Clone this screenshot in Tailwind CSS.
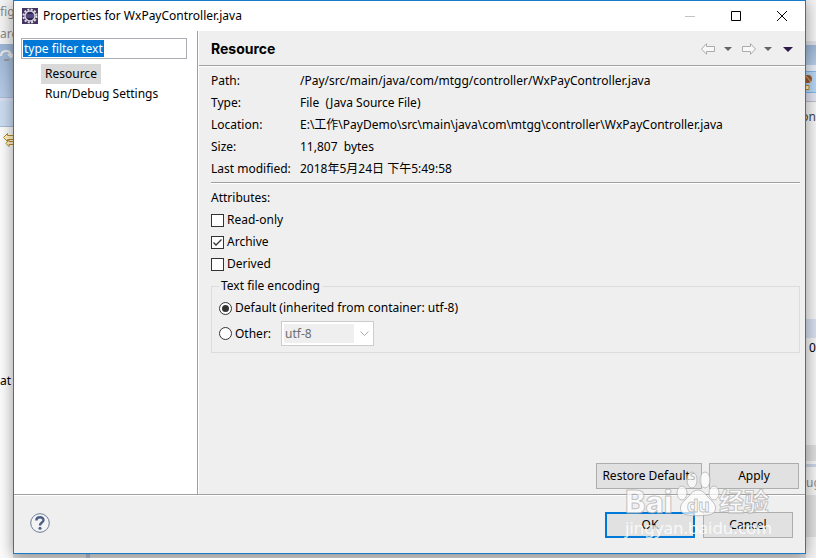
<!DOCTYPE html>
<html lang="en">
<head>
    <meta charset="UTF-8">
    <meta name="viewport" content="width=device-width, initial-scale=1.0">
    <title>Properties for WxPayController.java</title>
    <script src="https://cdn.jsdelivr.net/npm/@tailwindcss/browser@4"></script>
</head>
<body class="min-h-screen bg-[#f3f3f3] font-['Noto_Sans','Noto_Sans_CJK_SC',sans-serif] text-xs leading-[22px] text-black">

<div class="min-h-screen flex overflow-hidden">

    <!-- Workbench, left of the dialog -->
    <div class="w-[13px] shrink-0 flex flex-col overflow-hidden whitespace-nowrap bg-[#fbfbfb]">
        <div class="h-11 pt-px bg-[#f3f3f3] text-[#888]">
            <div>fig</div>
            <div>are</div>
        </div>
        <div class="h-[54px] pt-1 border-b border-[#a9bbd3] bg-linear-to-b from-[#9cb5d5] to-[#b5cbe6]">
            <svg class="w-[13px] h-4" viewBox="0 0 13 16" fill="none" stroke="#e8e8e8" stroke-width="2">
                <path d="M1 8C1 2 10 1 11 7M8 6l3 3 3-3"/>
                <path d="M4 12h5" stroke="#999"/>
            </svg>
        </div>
        <div class="h-[29px] mb-1 border-t-3 border-b border-t-[#d9def0] border-b-[#a9bbd3] bg-[#cbdcf0]"></div>
        <svg class="w-[13px] h-5" viewBox="0 0 13 20" fill="#fff3c4" stroke="#b8892b">
            <path d="M3.500 6.500l4-4v2h7v4h-7v2zM14 10.500H9v-2l-3 4 3 3v-2h5z"/>
        </svg>
        <div class="mt-[219px]">at</div>
    </div>

    <div class="flex-1 min-w-0 flex flex-col">

        <!-- Dialog -->
        <div class="relative flex-1 flex flex-col border border-[#1b7bcb] bg-[#efefef] shadow-[0_2px_14px_rgba(0,0,0,0.4)]">

            <!-- Title bar -->
            <div class="h-[30px] shrink-0 flex items-center bg-white pl-2 pr-[18px]">
                <svg class="size-4 mr-[5px]" viewBox="0 0 16 16">
                    <rect width="16" height="16" fill="#43355f"/>
                    <circle cx="8" cy="8" r="6.500" fill="none" stroke="#e2dfe6" stroke-width="2" stroke-dasharray="2 1.400"/>
                    <circle cx="8" cy="8" r="5" fill="#2c2255" stroke="#d8d4dc" stroke-width="1.500"/>
                    <path d="M4 7h8M4 9h8" stroke="#7b6da6"/>
                </svg>
                <h1>Properties for WxPayController.java</h1>
                <div class="ml-auto flex items-center gap-9">
                    <button type="button" aria-label="Minimize">
                        <svg class="size-[10px]" viewBox="0 0 10 10" stroke="#c4c4c4"><path d="M0 5.500h10"/></svg>
                    </button>
                    <button type="button" aria-label="Maximize">
                        <svg class="size-[10px]" viewBox="0 0 10 10" fill="none" stroke="#000"><path d="M.5.5h9v9h-9z"/></svg>
                    </button>
                    <button type="button" aria-label="Close">
                        <svg class="size-[10px]" viewBox="0 0 10 10" stroke="#000"><path d="M0 0l10 10M10 0L0 10"/></svg>
                    </button>
                </div>
            </div>

            <div class="flex-1 flex">
                <!-- Page tree -->
                <div class="w-[184px] shrink-0 bg-white border-r border-[#a0a0a0] pt-[7px] pl-[7px] pr-[10px] leading-5">
                    <div class="h-[21px] border border-[#abadb3] p-px flex">
                        <input type="text" aria-label="Filter" value="type filter text"
                               class="field-sizing-content h-[17px] px-px bg-[#0078d7] text-white outline-none">
                    </div>
                    <ul class="pt-[5px] pl-5">
                        <li><a href="#" class="block w-fit px-1 bg-[#d9d9d9]">Resource</a></li>
                        <li><a href="#" class="block w-fit px-1">Run/Debug Settings</a></li>
                    </ul>
                </div>

                <!-- Resource page -->
                <div class="flex-1 min-w-0 flex flex-col border-l border-white">
                    <div class="h-[35px] shrink-0 flex items-center border-b border-[#a0a0a0] pl-3 pr-3">
                        <h2 class="pt-[2px] font-['Inter',sans-serif] font-bold text-sm">Resource</h2>
                        <div class="ml-auto flex items-center pt-[2px]">
                            <button type="button" aria-label="Back">
                                <svg class="w-4 h-3" viewBox="0 0 16 12" fill="#f8f8f8" stroke="#ababab"><path d="M1.500 6l5-5.300V3.500h8v5h-8v2.800z"/></svg>
                            </button>
                            <button type="button" class="ml-2" aria-label="Back history">
                                <svg class="w-2 h-1" viewBox="0 0 8 4" fill="#666"><path d="M0 0h8L4 4z"/></svg>
                            </button>
                            <button type="button" class="ml-2" aria-label="Forward">
                                <svg class="w-4 h-3" viewBox="0 0 16 12" fill="#f8f8f8" stroke="#ababab"><path d="M15.500 6l-5-5.300V3.500h-8v5h8v2.800z"/></svg>
                            </button>
                            <button type="button" class="ml-2" aria-label="Forward history">
                                <svg class="w-2 h-1" viewBox="0 0 8 4" fill="#666"><path d="M0 0h8L4 4z"/></svg>
                            </button>
                            <button type="button" class="ml-[11px]" aria-label="Menu">
                                <svg class="w-[10px] h-[5px]" viewBox="0 0 10 5" fill="#2e1a47"><path d="M0 0h10L5 5z"/></svg>
                            </button>
                        </div>
                    </div>

                    <div class="flex-1 flex flex-col border-t border-white pt-[3px] pl-3 pr-[5px] pb-[5px]">
                        <dl class="grid grid-cols-[89px_1fr] border-b border-[#a0a0a0] pb-[2px] whitespace-nowrap">
                            <dt>Path:</dt>
                            <dd>/Pay/src/main/java/com/mtgg/controller/WxPayController.java</dd>
                            <dt>Type:</dt>
                            <dd>File&nbsp; (Java Source File)</dd>
                            <dt>Location:</dt>
                            <dd>E:\工作\PayDemo\src\main\java\com\mtgg\controller\WxPayController.java</dd>
                            <dt>Size:</dt>
                            <dd>11,807&nbsp; bytes</dd>
                            <dt>Last modified:</dt>
                            <dd>2018年5月24日 下午5:49:58</dd>
                        </dl>

                        <div class="border-t border-white pt-[3px]">
                            <div>Attributes:</div>
                            <label class="flex items-center gap-[3px]">
                                <input type="checkbox" class="appearance-none size-[13px] border border-[#333] bg-white">
                                Read-only
                            </label>
                            <label class="flex items-center gap-[3px]">
                                <span class="grid">
                                    <input type="checkbox" checked class="col-start-1 row-start-1 appearance-none size-[13px] border border-[#333] bg-white">
                                    <svg class="col-start-1 row-start-1 size-[13px] pointer-events-none" viewBox="0 0 13 13" fill="none" stroke="#333" stroke-width="1.300"><path d="M2.500 6.500L5 9l5.500-5.500"/></svg>
                                </span>
                                Archive
                            </label>
                            <label class="flex items-center gap-[3px]">
                                <input type="checkbox" class="appearance-none size-[13px] border border-[#333] bg-white">
                                Derived
                            </label>
                        </div>

                        <fieldset class="border border-[#dcdcdc] pl-[7px] pb-[6px]">
                            <legend class="px-[2px]">Text file encoding</legend>
                            <label class="flex items-center gap-[3px]">
                                <span class="grid">
                                    <input type="radio" name="encoding" checked class="col-start-1 row-start-1 appearance-none size-[13px] rounded-full border border-[#333] bg-white">
                                    <span class="col-start-1 row-start-1 place-self-center size-[7px] rounded-full bg-[#333] pointer-events-none"></span>
                                </span>
                                Default (inherited from container: utf-8)
                            </label>
                            <div class="flex items-center gap-[10px] pt-[2px]">
                                <label class="flex items-center gap-[3px]">
                                    <input type="radio" name="encoding" class="appearance-none size-[13px] rounded-full border border-[#333] bg-white">
                                    Other:
                                </label>
                                <div class="w-[93px] h-[25px] flex items-center border border-[#ccc] bg-white p-[2px]">
                                    <select disabled aria-label="Other encoding" class="appearance-none w-[70px] h-[19px] px-px bg-[#efefef] text-[#6d6d6d] leading-[19px] opacity-100">
                                        <option>utf-8</option>
                                    </select>
                                    <svg class="w-[9px] h-[5px] ml-[6px]" viewBox="0 0 9 5" fill="none" stroke="#aaa"><path d="M.5.5l4 4 4-4"/></svg>
                                </div>
                            </div>
                        </fieldset>

                        <div class="mt-auto flex justify-end gap-[7px] pr-px">
                            <button type="button" class="w-[106px] h-[26px] border border-[#adadad] bg-[#e1e1e1] whitespace-nowrap">Restore Defaults</button>
                            <button type="button" class="w-[90px] h-[26px] border border-[#adadad] bg-[#e1e1e1]">Apply</button>
                        </div>
                    </div>
                </div>
            </div>

            <!-- Dialog buttons -->
            <div class="border-t border-[#a0a0a0]">
                <div class="h-[58px] flex items-center gap-2 border-t border-white pl-4 pr-3">
                    <button type="button" class="mr-auto pb-1" aria-label="Help">
                        <svg class="size-5" viewBox="0 0 20 20">
                            <circle cx="10" cy="10" r="9.300" fill="#f4f4f4" stroke="#6b7a96"/>
                            <path d="M6.300 7.500C6.500 3 13.700 3.200 13.500 7.300C13.400 9.600 10 9.500 10 12.500" fill="none" stroke="#4c5f86" stroke-width="2.400"/>
                            <circle cx="10" cy="15.300" r="1.500" fill="#4c5f86"/>
                        </svg>
                    </button>
                    <button type="button" class="w-[90px] h-[26px] border-2 border-[#0078d7] bg-[#e1e1e1] leading-5">OK</button>
                    <button type="button" class="w-[90px] h-[26px] border border-[#adadad] bg-[#e1e1e1]">Cancel</button>
                </div>
            </div>

            <!-- Watermark -->
            <svg class="absolute right-[33px] bottom-[9px] w-[148px] h-[74px] pointer-events-none font-['Inter','Noto_Sans_CJK_SC',sans-serif]"
                 viewBox="0 0 148 74" fill="#fff" fill-opacity=".7" stroke="#aaa" stroke-opacity=".7">
                <text x="1" y="43" font-size="31" font-weight="800">Bai</text>
                <ellipse cx="58" cy="23" rx="5" ry="7"/>
                <ellipse cx="68" cy="10" rx="5" ry="8"/>
                <ellipse cx="81" cy="10" rx="5" ry="8"/>
                <ellipse cx="90" cy="23" rx="5" ry="7"/>
                <path d="M74 20c6 0 8 6 13 10 7 6 6 14-3 15-6 1-14 1-20 0-9-1-10-9-3-15 5-4 7-10 13-10z"/>
                <text x="63" y="42" font-size="18" font-weight="700">du</text>
                <text x="95" y="41" font-size="25" font-weight="700">经验</text>
                <text x="1" y="64" font-size="17" stroke="none" fill-opacity=".8" font-family="Noto Sans">jingyan.baidu.com</text>
            </svg>
        </div>

        <!-- Workbench, below the dialog -->
        <div class="h-1 flex bg-[#dcdcdc]">
            <div class="w-[77px] border-r-4 border-[#b4bccf]"></div>
        </div>
    </div>

    <!-- Workbench, right of the dialog -->
    <div class="w-[10px] shrink-0 flex flex-col overflow-hidden whitespace-nowrap bg-[#f3f3f3]">
        <div class="h-[45px] border-b-4 border-[#dcdfe4]"></div>
        <div class="h-5 bg-linear-to-b from-[#9cb5d5] to-[#b5cbe6]"></div>
        <div class="h-[6px] bg-[#e6ebf5]"></div>
        <div class="h-[22px] border-y border-[#7fb6e8] bg-[#b4d5f5]">
            <svg class="w-[10px] h-5" viewBox="0 0 10 20">
                <ellipse cx="2" cy="7" rx="4" ry="4" fill="#9a5a2e"/>
                <path d="M0 4l5 6" stroke="#e3b98a"/>
                <path d="M-2 13.500h5v4h-5z" fill="#fff3c4" stroke="#b8892b"/>
            </svg>
        </div>
        <div class="h-[9px] border-b border-[#b9bcc9] bg-[#dfe2f0]"></div>
        <div class="h-[217px] pt-1 text-[#444] flex justify-end">on</div>
        <div class="h-[19px] bg-[#d5deee]"></div>
        <div class="h-[107px] pl-[3px] leading-[19px]">0</div>
        <div class="h-4 bg-[#dcdcdc]"></div>
        <div class="h-[6px] border-b-3 border-[#c9d2e6]"></div>
        <div class="h-7 pt-[5px] text-[#888]">ug</div>
        <div class="h-[42px] bg-[#dfdfdf]"></div>
    </div>
</div>

</body>
</html>
